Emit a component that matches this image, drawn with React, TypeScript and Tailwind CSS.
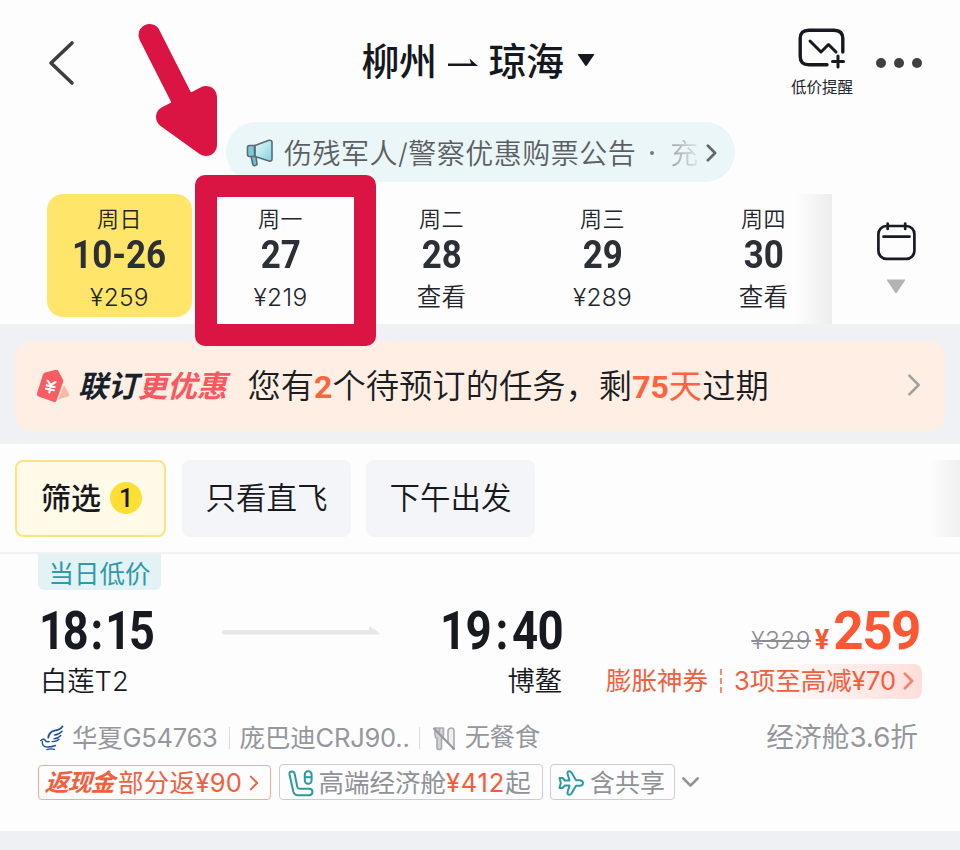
import * as React from "react"
import clsx from "clsx"

interface DayItem {
  week: string
  day: string
  price: string
  active?: boolean
}

const days: DayItem[] = [
  { week: "周日", day: "10-26", price: "¥259", active: true },
  { week: "周一", day: "27", price: "¥219" },
  { week: "周二", day: "28", price: "查看" },
  { week: "周三", day: "29", price: "¥289" },
  { week: "周四", day: "30", price: "查看" },
]

function Chevron({ className, width = 3 }: { className?: string; width?: number }) {
  return (
    <svg viewBox="0 0 12 20" fill="none" stroke="currentColor" strokeWidth={width} className={className}>
      <path d="M2 2 L10 10 L2 18" strokeLinecap="round" strokeLinejoin="round" />
    </svg>
  )
}

function MegaphoneIcon() {
  return (
    <svg viewBox="0 0 28 30" className="h-[30px] w-7 shrink-0" fill="none">
      <defs>
        <linearGradient id="horn" x1="0" y1="0" x2="1" y2="1">
          <stop offset="0" stopColor="#e9fafb" />
          <stop offset="1" stopColor="#7fd3de" />
        </linearGradient>
      </defs>
      <path d="M5 18 L10 18 L11 26.500 Q8.500 29 6.800 26.500 Z" fill="#69c3d1" stroke="#5d6a73" strokeWidth="1.600" strokeLinejoin="round" />
      <path d="M9 7.500 L23 2.200 Q26 2 26 4.500 L26 21 Q26 23.500 23 23 L9 18.500 Z" fill="url(#horn)" stroke="#5d6a73" strokeWidth="1.600" strokeLinejoin="round" />
      <path d="M3.500 7.500 H8.500 V18.500 H3.500 Q1.500 18.500 1.500 16.500 V9.500 Q1.500 7.500 3.500 7.500 Z" fill="#7ccad6" stroke="#5d6a73" strokeWidth="1.600" />
    </svg>
  )
}

function PriceAlertIcon() {
  return (
    <svg
      viewBox="0 0 48 41"
      className="h-[41px] w-12"
      fill="none"
      stroke="#16191f"
      strokeWidth="3.400"
      strokeLinecap="round"
      strokeLinejoin="round"
    >
      <path d="M29 36.700 H11 Q2.200 36.700 2.200 28.500 V10.500 Q2.200 2.200 11 2.200 H36 Q44.800 2.200 44.800 10.500 V24" />
      <path d="M12 13 L23 24 L30.500 16.500 L38 24" strokeWidth="3" />
      <path d="M34.500 33.500 H45.500 M40 28 V39" strokeWidth="3" />
    </svg>
  )
}

function CalendarIcon() {
  return (
    <svg viewBox="0 0 40 40" className="h-10 w-10" fill="none" stroke="#181b22" strokeWidth="2.700" strokeLinecap="round">
      <rect x="2.400" y="5" width="36" height="32.800" rx="8" />
      <path d="M11.700 2.500 V8 M29.200 2.500 V8" />
      <path d="M7.500 15.700 H33.500" />
    </svg>
  )
}

function CouponIcon() {
  return (
    <svg viewBox="0 0 34 34" className="h-[34px] w-[34px] shrink-0">
      <path d="M28 16 L33 25 Q33.500 27 32 27.500 L22 30.500 Z" fill="#fbb9a4" />
      <path
        d="M9 3.500 L20 0.800 Q21.500 0.600 22.300 2 L27 10.500 Q27.600 11.700 27.100 13 L20.500 31.500 Q19.700 33.600 17.500 32.800 L2.500 27.500 Q0.300 26.500 0.900 24.500 L7 5.500 Q7.600 3.900 9 3.500 Z"
        fill="#f95c63"
      />
      <g stroke="#fff" strokeWidth="2.100" strokeLinecap="round" fill="none">
        <path d="M11.500 11.500 L14.800 16 L19.500 13" />
        <path d="M14.800 16 L13.300 23.500 M10.600 16.400 L18.600 18 M10 19.700 L18 21.300" />
      </g>
    </svg>
  )
}

function AirlineIcon() {
  return (
    <svg viewBox="0 0 24 26" className="h-[26px] w-6 shrink-0" fill="none" stroke="#1f53a0" strokeLinecap="round">
      <path d="M22.500 1.500 Q20 5 14.500 5.600 Q9 7 8.300 12.500" strokeWidth="1.900" />
      <path d="M22 6.200 Q19 9.600 14.500 10" strokeWidth="1.500" />
      <path d="M20.800 10.500 Q18 13.600 14 13.800" strokeWidth="1.400" />
      <path d="M19 14.200 Q17 16.800 12 16.600" strokeWidth="1.300" />
      <path d="M0.800 15.500 Q4 13.200 5.200 15.400 Q6.200 17.400 9 16.500" strokeWidth="1.500" />
      <path d="M2.300 16.500 Q2 21.800 7 22 Q11.500 22.200 15.500 20.500" strokeWidth="1.400" />
      <path d="M7 24.600 Q10.500 23.200 14.500 24.400" strokeWidth="1.300" />
    </svg>
  )
}

function NoMealIcon() {
  return (
    <svg viewBox="0 0 24 25" className="h-[25px] w-6 shrink-0" fill="none" stroke="#a9acb0" strokeWidth="1.600" strokeLinejoin="round">
      <path d="M3 2 H11.500 V9 Q11.500 11.500 9.500 12.500 V22 Q9.500 23.500 7.300 23.500 Q5 23.500 5 22 V12.500 Q3 11.500 3 9 Z" fill="#d3d4d7" />
      <path d="M7.300 2 V9" />
      <path d="M16 17.500 V5 Q16.500 2 19.500 2 Q22 2 22 5 V22 Q22 23.500 20.500 23.500" fill="#eeeff0" />
      <path d="M1.500 2 L22.500 23.500" stroke="#96999e" strokeWidth="2.200" />
    </svg>
  )
}

function SeatIcon() {
  return (
    <svg viewBox="0 0 26 27" className="h-[27px] w-[26px] shrink-0" fill="none" stroke="#2a9aa5" strokeWidth="2" strokeLinejoin="round">
      <path d="M1.500 4.500 Q1 1.500 4 1.500 Q6.300 1.500 6.700 4 L9.300 17 Q9.700 18.700 11.500 18.700 H21 Q24.500 18.700 24.500 21.800 Q24.500 25.200 21 25.200 H10 Q6.300 25.200 5.300 21.500 Z" />
      <rect x="16.800" y="1.300" width="6.800" height="12.500" rx="3.200" />
      <path d="M16.800 7.200 H23.600" />
    </svg>
  )
}

function PlaneIcon() {
  return (
    <svg viewBox="0 0 26 26" className="h-[26px] w-[26px] shrink-0" fill="none" stroke="#2a9aa5" strokeWidth="2" strokeLinejoin="round">
      <path d="M1.500 8 H4.500 L7 10.500 H11.500 L9.500 3.500 Q9.300 1.300 11.200 1.300 Q12.700 1.300 13.500 2.500 L18 10.200 H22 Q25 10.800 25 13 Q25 15.200 22 15.800 H18 L13.500 23.500 Q12.700 24.700 11.200 24.700 Q9.300 24.700 9.500 22.500 L11.500 15.500 H7 L4.500 18 H1.500 L2.800 13 Z" />
    </svg>
  )
}

function Header() {
  return (
    <header className="flex h-[122px] items-start justify-between pr-[38px] pl-12">
      <svg viewBox="0 0 28 46" className="mt-10 h-[46px] w-7" fill="none" stroke="#3e3e3e" strokeWidth="3.600">
        <path d="M24 3 L3 23 L24 43" strokeLinecap="round" strokeLinejoin="round" />
      </svg>
      <h1 className="mt-[31px] ml-[90px] flex h-[60px] items-center text-[38px] leading-none font-medium tracking-[-0.5px] text-[#15181e]">
        柳州
        <svg viewBox="0 0 32 12" className="mt-1 mr-[10px] ml-[10px] h-3 w-8">
          <path d="M1 6.500 H24 L22.500 1.500 L31 9 H1 Z" fill="#15181e" />
        </svg>
        琼海
        <svg viewBox="0 0 18 14" className="mb-0.5 ml-[13px] h-[14px] w-[18px]">
          <path d="M1.500 1 H16.500 Q17.800 1 16.800 2.300 L10 12.300 Q9 13.600 8 12.300 L1.200 2.300 Q0.200 1 1.500 1 Z" fill="#15181e" />
        </svg>
      </h1>
      <div className="flex">
        <div className="mt-7 flex w-16 flex-col items-center">
          <PriceAlertIcon />
          <span className="mt-2.5 text-[15.500px] leading-[18px] whitespace-nowrap text-[#22252b]">低价提醒</span>
        </div>
        <div className="mt-[58px] ml-[22px] flex gap-2">
          <i className="size-2.5 rounded-full bg-[#404040]" />
          <i className="size-2.5 rounded-full bg-[#404040]" />
          <i className="size-2.5 rounded-full bg-[#404040]" />
        </div>
      </div>
    </header>
  )
}

function Notice() {
  return (
    <div className="ml-[226px] flex h-[60px] w-[509px] items-center rounded-full bg-[#ebf6f8] pt-0.5 pl-5 text-[28px] leading-none font-[350] text-[#5b5f63]">
      <MegaphoneIcon />
      <span className="mt-px ml-[10px] tracking-[0.500px] whitespace-nowrap">伤残军人/警察优惠购票公告</span>
      <i className="ml-[14px] size-1 rounded-full bg-[#777b7e]" />
      <span className="mt-px ml-4 w-7 bg-linear-to-r from-[#9da4a6] to-[#dbe6e8] bg-clip-text text-transparent">充</span>
      <Chevron className="ml-[8px] h-[18px] w-[11px] text-[#65696c]" />
    </div>
  )
}

function DateStrip() {
  return (
    <div className="flex h-[130px]">
      <div className="relative flex w-[832px] gap-4 pl-[47px]">
        {days.map(({ week, day, price, active }) => (
          <div
            key={week}
            className={clsx(
              "flex h-[123px] w-[145px] shrink-0 flex-col items-center rounded-2xl text-[#22252c]",
              active && "bg-[#ffe66a]"
            )}
          >
            <span className="mt-3 text-[22px] leading-[26px] font-[350] tracking-[0.500px]">{week}</span>
            <span className="mt-1 scale-x-[0.920] font-['Roboto',sans-serif] text-[38px] leading-[38px] font-bold text-[#2c2f35]">
              {day}
            </span>
            <span className="mt-2 text-[24.500px] leading-[30px] font-[350] tracking-[0.300px]">{price}</span>
          </div>
        ))}
        <div className="absolute top-0 right-0 h-full w-9 bg-linear-to-r from-transparent to-[#ededed]" />
      </div>
      <div className="flex w-32 flex-col items-center pt-[27px]">
        <CalendarIcon />
        <svg viewBox="0 0 20 15" className="mt-[18px] h-[15px] w-5">
          <path d="M1.500 0.500 H18.500 Q19.500 0.500 18.800 1.800 L11 13.500 Q10 14.800 9 13.500 L1.200 1.800 Q0.500 0.500 1.500 0.500 Z" fill="#b3b3b3" />
        </svg>
      </div>
    </div>
  )
}

function TaskBanner() {
  return (
    <div className="h-[120px] bg-[#eff1f4] px-[15px] pt-[17px]">
      <div className="flex h-[90px] items-center rounded-2xl bg-[#feeee3] pr-6 pl-[21px] leading-none">
        <CouponIcon />
        <span className="ml-[8px] text-[30px] font-bold tracking-[-0.300px] whitespace-nowrap text-[#17212b] italic">
          联订<span className="text-[#f9585f]">更优惠</span>
        </span>
        <span className="mt-0.5 ml-[21px] text-[33.300px] font-[350] whitespace-nowrap text-[#1a1d22]">
          您有<b className="font-['Roboto',sans-serif] text-[32px] text-[#fa6440]">2</b>个待预订的任务，剩
          <b className="font-['Roboto',sans-serif] text-[32px] text-[#fa6440]">75</b>
          <span className="font-normal text-[#fa6440]">天</span>过期
        </span>
        <Chevron className="mb-[3px] ml-auto h-6 w-[14px] text-[#a3a09d]" width={2.2} />
      </div>
    </div>
  )
}

function Filters() {
  return (
    <div className="relative flex h-[110px] gap-4 border-b-2 border-[#f1f2f4] pt-4 pl-[15px] text-[30.500px] leading-none text-[#17191d]">
      <button className="flex h-[77px] w-[151px] items-center rounded-lg border-2 border-[#fbe47f] bg-[#fffbe8] pl-[24px]">
        <span className="mb-0.5 text-[30px] font-medium">筛选</span>
        <span className="mb-px ml-[9px] flex size-8 items-center justify-center rounded-full bg-[#ffdf33] font-['Roboto',sans-serif] text-[25px] font-medium">
          1
        </span>
      </button>
      <button className="h-[77px] w-[169px] rounded-lg bg-[#f4f5f8] font-[350]">只看直飞</button>
      <button className="-ml-px h-[77px] w-[169px] rounded-lg bg-[#f4f5f8] font-[350]">下午出发</button>
      <div className="absolute top-4 right-0 h-[77px] w-8 bg-linear-to-r from-transparent to-[#f0f0f0]" />
    </div>
  )
}

function FlightTime({ hour, minute, className }: { hour: string; minute: string; className?: string }) {
  return (
    <span className={clsx("font-['Roboto',sans-serif] text-[53px] font-bold", className)}>
      {hour}
      <span className="mx-[5px]">:</span>
      {minute}
    </span>
  )
}

function FlightCard() {
  return (
    <section className="h-[277px] pr-[42px] pl-[38px] leading-none">
      <div className="flex h-9 w-[123px] items-center justify-center rounded-b-md bg-[#e3f2f5] pt-1 text-[25.500px] text-[#2f9ba6]">
        当日低价
      </div>

      <div className="flex h-[82px] items-center justify-between text-[#171a20]">
        <div className="flex w-[525px] items-center">
          <FlightTime hour="18" minute="15" className="ml-px w-[182px] origin-left scale-x-[0.850] tracking-[-2.600px]" />
          <svg viewBox="0 0 160 10" className="h-2.5 w-40">
            <path d="M3 4 H148 V1.500 Q148 0 150 1 L158.500 7 Q159 8.500 157 8.500 H3 Q0.500 8.500 0.500 6.200 Q0.500 4 3 4 Z" fill="#e8e8e8" />
          </svg>
          <FlightTime hour="19" minute="40" className="ml-auto origin-right scale-x-[0.860] tracking-[-0.700px]" />
        </div>
        <div className="-mr-0.5 flex items-baseline">
          <span className="text-[24.500px] font-light tracking-[0.400px] text-[#8b8d91] line-through">¥329</span>
          <span className="ml-1 font-['Roboto',sans-serif] text-[27px] font-bold text-[#fc5732]">¥</span>
          <span className="ml-1 font-['Roboto',sans-serif] text-[53px] font-bold tracking-[-1.500px] text-[#fc5732]">259</span>
        </div>
      </div>

      <div className="-mt-[9px] -mr-1 flex h-9 items-center justify-between">
        <div className="flex w-[524px] justify-between pt-px pl-[2px] text-[27.300px] font-[350] text-[#171a20]">
          <span>白莲T2</span>
          <span>博鳌</span>
        </div>
        <div className="flex items-center text-[25.500px] whitespace-nowrap text-[#f0603f]">
          <span>膨胀神券</span>
          <i className="ml-3 h-6 border-l-2 border-dashed border-[#f58d75]" />
          <span className="ml-1 flex h-[35px] items-center rounded-lg bg-linear-to-r from-transparent from-20% to-[#fddfda] pr-2 pl-2">
            3项至高减¥70
            <Chevron className="ml-[7px] h-[18px] w-[11px] text-[#f5846f]" />
          </span>
        </div>
      </div>

      <div className="mt-[21px] flex h-9 items-center text-[25.500px] whitespace-nowrap text-[#94979c]">
        <span className="ml-0.5">
          <AirlineIcon />
        </span>
        <span className="ml-2 tracking-[-0.250px]">华夏G54763</span>
        <i className="ml-[11px] h-[22px] w-px bg-[#dadbdd]" />
        <span className="ml-[10px] tracking-[-0.200px]">庞巴迪CRJ90..</span>
        <i className="ml-[9px] h-[22px] w-px bg-[#dadbdd]" />
        <span className="ml-3">
          <NoMealIcon />
        </span>
        <span className="ml-[9px] text-[25.200px]">无餐食</span>
        <span className="ml-auto text-[27.700px]">经济舱3.6折</span>
      </div>

      <div className="mt-2 flex h-9 items-center gap-[7.500px] text-[25.500px] whitespace-nowrap text-[#8f9297]">
        <div className="flex h-[35px] w-[233px] items-center rounded border-[1.500px] border-[#f9a797] pt-0.5 pl-[6px] text-[#f0603f]">
          <b className="w-[69px] -skew-x-3 text-[24px] tracking-[-1px] italic">返现金</b>
          <span className="ml-1 tracking-[0.300px]">部分返¥90</span>
          <Chevron className="ml-[7px] h-4 w-[10px]" width={2.4} />
        </div>
        <div className="flex h-9 w-[264px] items-center rounded border-[1.500px] border-[#cccdd0] pt-0.5 pl-2">
          <SeatIcon />
          <span className="ml-[5px]">
            高端经济舱<span className="tracking-[0.800px] text-[#fa5a37]">¥412</span>起
          </span>
        </div>
        <div className="flex h-9 w-[125px] items-center rounded border-[1.500px] border-[#cccdd0] pt-0.5 pl-[7px]">
          <PlaneIcon />
          <span className="ml-[6px] text-[25px]">含共享</span>
        </div>
        <Chevron className="ml-0.5 h-[18px] w-[11px] rotate-90 text-[#8f9297]" />
      </div>
    </section>
  )
}

function Markup() {
  return (
    <div className="pointer-events-none absolute inset-0">
      <svg viewBox="0 0 960 850" className="absolute inset-0" fill="#da1443" stroke="#da1443" strokeWidth="22" strokeLinecap="round" strokeLinejoin="round">
        <path d="M149.500 35 L186 107" />
        <path d="M167 117 L206 97 V145 Z" />
      </svg>
      <div className="absolute top-[175px] left-[195px] h-[171px] w-[181px] rounded-[10px] border-[22px] border-[#da1443]" />
    </div>
  )
}

export default function App() {
  return (
    <div
      lang="zh-CN"
      className="relative h-[850px] w-[960px] overflow-hidden bg-[#fdfdfd] font-['Inter','Noto_Sans_CJK_SC',sans-serif]"
    >
      <Header />
      <Notice />
      <div className="h-3" />
      <DateStrip />
      <TaskBanner />
      <Filters />
      <FlightCard />
      <div className="h-5 bg-[#eff0f3]" />
      <Markup />
    </div>
  )
}
